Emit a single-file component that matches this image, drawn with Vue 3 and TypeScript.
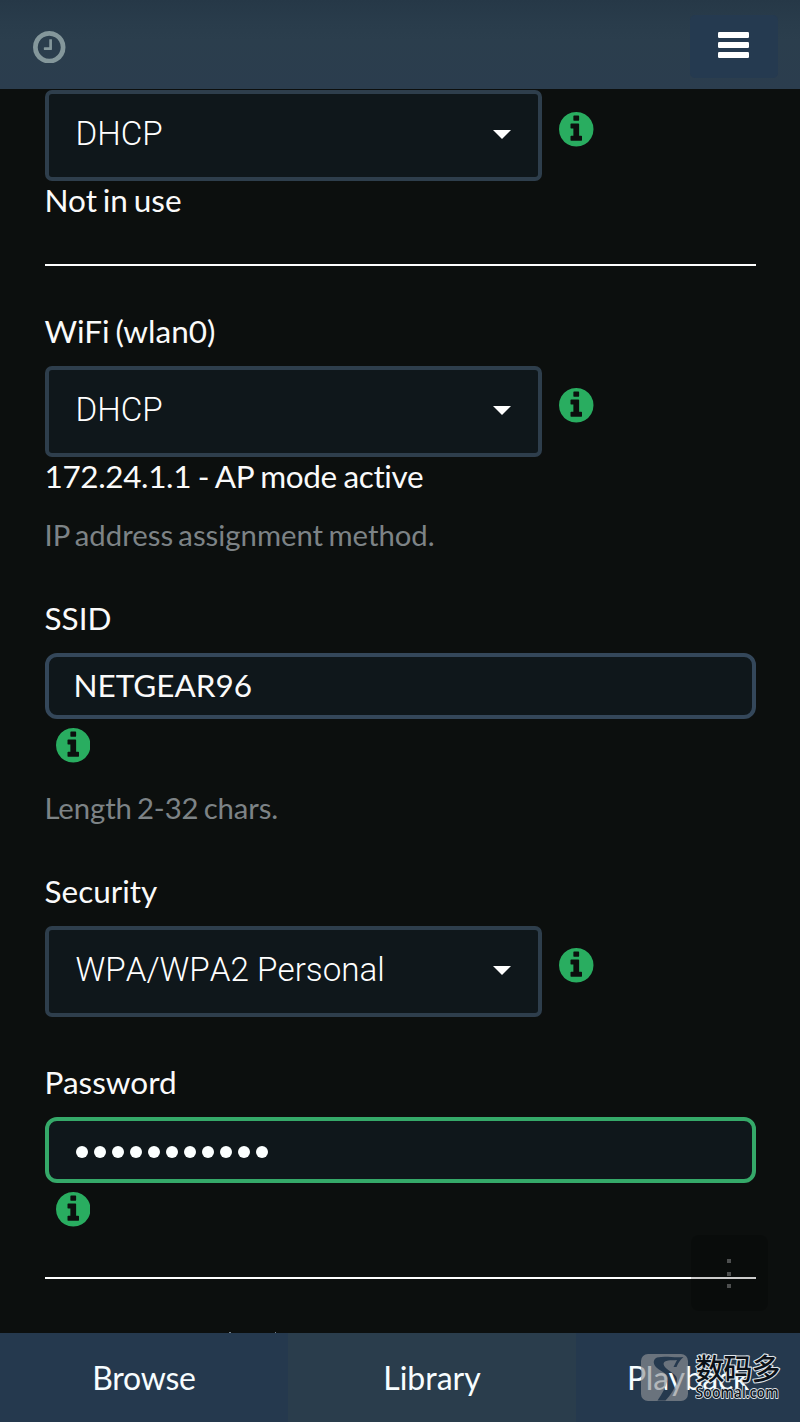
<script setup lang="ts">
const infoPath =
  'M1152 1376v-160q0-14-9-23t-23-9h-96v-512q0-14-9-23t-23-9h-320q-14 0-23 9t-9 23v160q0 14 9 23t23 9h96v320h-96q-14 0-23 9t-9 23v160q0 14 9 23t23 9h448q14 0 23-9t9-23zM1024 480v-160q0-14-9-23t-23-9h-192q-14 0-23 9t-9 23v160q0 14 9 23t23 9h192q14 0 23-9t9-23zM1664 896q0 209-103 385.5t-279.5 279.5-385.5 103-385.5-103-279.5-279.5-103-385.5 103-385.5 279.5-279.5 385.5-103 385.5 103 279.5 279.5 103 385.5z'
const clockPath =
  'M1024 544v448q0 14-9 23t-23 9h-320q-14 0-23-9t-9-23v-64q0-14 9-23t23-9h224v-352q0-14 9-23t23-9h64q14 0 23 9t9 23zm416 352q0-148-73-273t-198-198-273-73-273 73-198 198-73 273 73 273 198 198 273 73 273-73 198-198 73-273zm224 0q0 209-103 385.5t-279.5 279.5-385.5 103-385.5-103-279.5-279.5-103-385.5 103-385.5 279.5-279.5 385.5-103 385.5 103 279.5 279.5 103 385.5z'
const passwordLength: number = 11
</script>

<template>
  <div class="screen">
    <header class="topbar">
      <svg class="clock" viewBox="128 128 1536 1536"><path :d="clockPath" /></svg>
      <button class="menu">
        <svg width="31" height="26" viewBox="0 0 31 26">
          <rect width="31" height="6" rx="1.2" />
          <rect y="10" width="31" height="6" rx="1.2" />
          <rect y="20" width="31" height="6" rx="1.2" />
        </svg>
      </button>
    </header>

    <main class="content">
      <div class="row">
        <div class="select"><span>DHCP</span><i class="caret"></i></div>
        <svg class="info" viewBox="128 128 1536 1536"><path :d="infoPath" /></svg>
      </div>
      <p class="line status">Not in use</p>
      <hr class="rule first" />

      <label class="line">WiFi (wlan0)</label>
      <div class="row after-label">
        <div class="select"><span>DHCP</span><i class="caret"></i></div>
        <svg class="info" viewBox="128 128 1536 1536"><path :d="infoPath" /></svg>
      </div>
      <p class="line ip">172.24.1.1 - AP mode active</p>
      <p class="line help method">IP address assignment method.</p>

      <label class="line ssid-label">SSID</label>
      <div class="input"><span>NETGEAR96</span></div>
      <svg class="info below" viewBox="128 128 1536 1536"><path :d="infoPath" /></svg>
      <p class="line help length">Length 2-32 chars.</p>

      <label class="line security-label">Security</label>
      <div class="row after-label">
        <div class="select"><span class="wpa">WPA/WPA2 Personal</span><i class="caret"></i></div>
        <svg class="info" viewBox="128 128 1536 1536"><path :d="infoPath" /></svg>
      </div>

      <label class="line password-label">Password</label>
      <div class="input focused">
        <div class="dots"><i v-for="n in passwordLength" :key="n"></i></div>
      </div>
      <svg class="info below" viewBox="128 128 1536 1536"><path :d="infoPath" /></svg>
      <hr class="rule last" />
      <div class="peek"><i></i><i></i></div>
    </main>

    <footer class="tabs">
      <div class="tab"><span class="tight">Browse</span></div>
      <div class="tab active"><span>Library</span></div>
      <div class="tab"><span class="tight">Playback</span></div>
    </footer>

    <div class="float"><i></i><i></i><i></i></div>

    <svg class="mark" width="150" height="60" viewBox="636 1348 150 60">
      <path
        class="tile"
        fill-rule="evenodd"
        d="M648 1354H681A7 7 0 0 1 688 1361V1394A7 7 0 0 1 681 1401H648A7 7 0 0 1 641 1394V1361A7 7 0 0 1 648 1354ZM683.500 1357C673 1358 666 1355.500 657 1357.500C652 1360 653.500 1365 657 1368C662 1372 669 1374 667.500 1380C666 1387 662 1394 657.500 1400.500H665.500C670 1396 677 1386 677 1379C677 1373 664 1370 663.500 1364C664 1359.500 671 1360.500 677 1360L673.500 1367H676.500C678 1363 680 1360 683.500 1357Z"
      />
      <text x="695.5" y="1380" class="cn" textLength="85">数码多</text>
      <text x="695.5" y="1397.500" class="en" textLength="83" lengthAdjust="spacingAndGlyphs">Soomal.com</text>
    </svg>
  </div>
</template>

<style>
body {
  margin: 0;
  background: #0c0f0e;
}
</style>

<style scoped>
.screen {
  position: relative;
  display: flex;
  flex-direction: column;
  width: 800px;
  height: 1422px;
  overflow: hidden;
  background: #0c0f0e;
  color: #fafafa;
  font-family: Lato, 'Liberation Sans', sans-serif;
  font-size: 31.5px;
  font-variant-ligatures: no-common-ligatures;
}
.topbar {
  box-sizing: border-box;
  flex: none;
  display: flex;
  justify-content: space-between;
  align-items: flex-start;
  height: 89px;
  padding: 15px 22px 0 33px;
  background: linear-gradient(#263847 0, #293c4b 22px, #2b3e4d 40px, #2b3d4e 100%);
}
.clock {
  width: 32.5px;
  height: 32.5px;
  margin-top: 15.5px;
  fill: #84979b;
}
.menu {
  box-sizing: border-box;
  display: flex;
  justify-content: center;
  align-items: flex-start;
  width: 88px;
  height: 63px;
  margin: 0;
  padding: 17px 2px 0 0;
  border: 0;
  border-radius: 5px;
  background: #253a50;
}
.menu svg {
  fill: #fff;
}
.content {
  box-sizing: border-box;
  flex: none;
  display: flex;
  flex-direction: column;
  height: 1244px;
  padding: 1px 44.5px 0 45px;
}
.row {
  display: flex;
  align-items: flex-start;
}
.select {
  box-sizing: border-box;
  display: flex;
  justify-content: space-between;
  width: 497px;
  height: 91px;
  padding: 19px 27.5px 0 26.5px;
  border: 4px solid #2e3e4c;
  border-radius: 7px;
  background: #0f171b;
  color: #fff;
  font-family: Roboto, 'Liberation Sans', sans-serif;
  font-size: 33.2px;
  font-weight: 350;
  line-height: 42px;
  white-space: nowrap;
}
.wpa {
  font-kerning: none;
}
.caret {
  width: 0;
  height: 0;
  margin-top: 17px;
  border: 9px solid transparent;
  border-top: 9px solid #fff;
  border-bottom: 0;
}
.info {
  flex: none;
  width: 34.5px;
  height: 34.5px;
  fill: #29ad60;
}
.row .info {
  margin: 22px 0 0 17px;
}
.info.below {
  margin: 9px 0 0 10.5px;
}
.line {
  display: block;
  flex: none;
  height: 40px;
  margin: 0 0 0 -0.5px;
  line-height: 38px;
  word-spacing: -2.2px;
  white-space: nowrap;
}
.ip {
  letter-spacing: -0.36px;
  word-spacing: -1px;
}
.rule {
  flex: none;
  width: 711px;
  height: 2px;
  margin: 43px 0 46px;
  border: 0;
  background: #fff;
}
.after-label {
  margin-top: 14px;
}
.help {
  color: #7d8386;
  font-size: 29.3px;
  line-height: 40px;
}
.method {
  margin-top: 18px;
}
.ssid-label {
  margin-top: 44px;
}
.input {
  box-sizing: border-box;
  flex: none;
  height: 66px;
  margin-top: 14px;
  padding: 9px 26px 0 24.5px;
  border: 4px solid #34475a;
  border-radius: 12px;
  background: #0f171b;
  line-height: 38px;
}
.length {
  margin-top: 25.5px;
  letter-spacing: -0.1px;
}
.security-label {
  margin-top: 44px;
}
.password-label {
  margin-top: 46px;
}
.input.focused {
  border-color: #35a969;
}
.dots {
  display: flex;
  gap: 6.05px;
  padding: 16px 0 0 2.5px;
}
.dots i {
  width: 12px;
  height: 12px;
  border-radius: 50%;
  background: #fbffff;
}
.rule.last {
  margin: 50.5px 0 0;
}
.peek {
  display: flex;
  flex: none;
  gap: 44px;
  margin: 53px 0 0 184px;
}
.peek i {
  width: 1.5px;
  height: 1px;
  background: #75818c;
}
.tabs {
  flex: none;
  display: grid;
  grid-template-columns: 288px 288px 224px;
  height: 89px;
  font-size: 32px;
}
.tab {
  padding-top: 25px;
  background: #25394e;
  line-height: 40px;
  text-align: center;
  color: #f7fdff;
  white-space: nowrap;
}
.tab.active {
  background: #2a3d4c;
}
.tight {
  letter-spacing: -0.25px;
}
.float {
  position: absolute;
  left: 691px;
  top: 1235px;
  box-sizing: border-box;
  display: flex;
  flex-direction: column;
  align-items: center;
  gap: 8.5px;
  width: 77px;
  height: 76px;
  padding: 24px 1px 0 0;
  border-radius: 8px;
  background: rgba(0, 0, 0, 0.2);
}
.float i {
  width: 4px;
  height: 4px;
  background: #4d4f4f;
}
.mark {
  position: absolute;
  left: 636px;
  top: 1348px;
}
.tile {
  fill: rgba(143, 146, 150, 0.65);
}
.cn,
.en {
  fill: #0b1118;
  stroke: #dfe5ea;
  paint-order: stroke;
  stroke-linejoin: round;
}
.cn {
  font: 500 29px 'Noto Sans CJK SC', sans-serif;
  stroke-width: 2.2px;
}
.en {
  font: 500 15.5px 'Noto Sans', sans-serif;
  stroke-width: 1.8px;
}
</style>
